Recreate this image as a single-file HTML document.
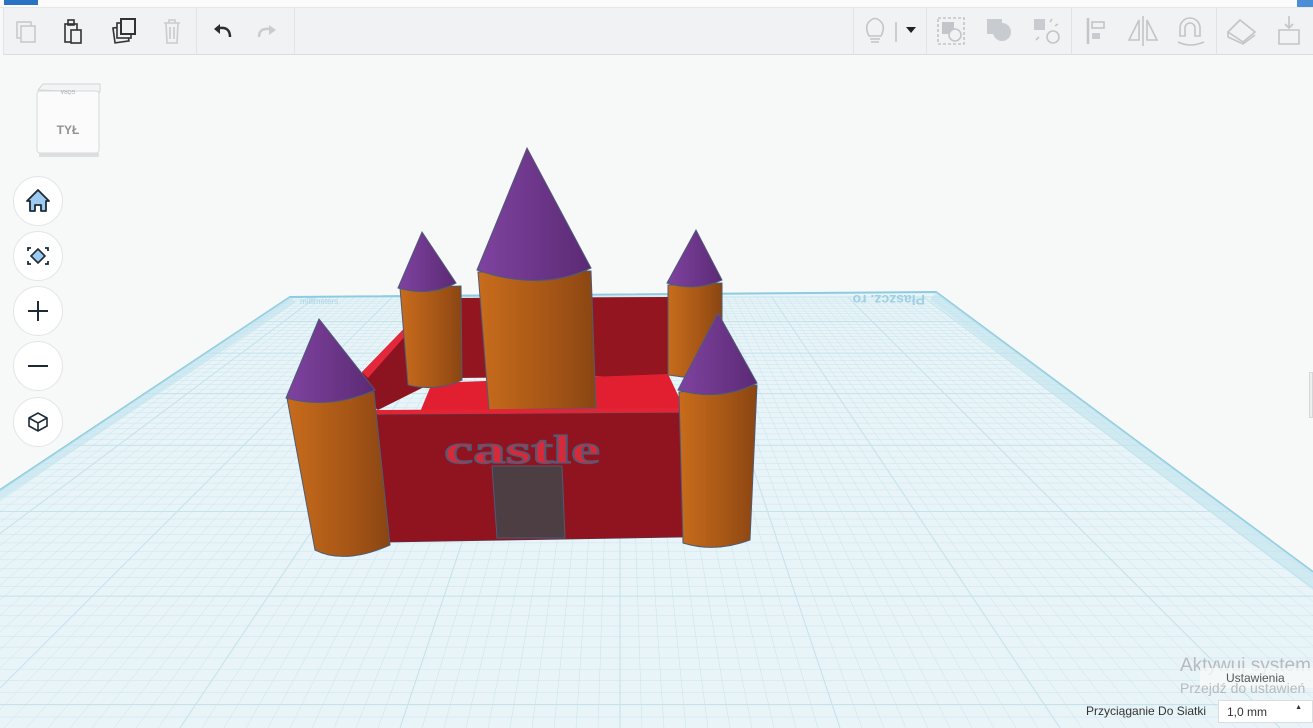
<!DOCTYPE html>
<html><head><meta charset="utf-8"><style>
*{margin:0;padding:0;box-sizing:border-box}
body{width:1313px;height:728px;overflow:hidden;background:#f7f8f8;font-family:"Liberation Sans","DejaVu Sans",sans-serif;position:relative}
.top{position:absolute;left:0;top:0;width:1313px;height:8px;background:#fbfbfc;border-bottom:1px solid #e6e7e8}
.tb{position:absolute;left:3px;top:8px;width:1310px;height:47px;background:#f1f2f3;border-bottom:1px solid #dcdddf;border-left:1px solid #e3e4e5}
.sep{position:absolute;top:8px;width:1px;height:46px;background:#e2e3e5}
.btn{position:absolute;width:50px;height:50px;border-radius:50%;background:#fff;border:1px solid #e4e5e7;left:13px}
svg{position:absolute;left:0;top:0}
</style></head><body>
<svg width="1313" height="728" id="scene">
<defs>
<linearGradient id="or" x1="0" x2="1"><stop offset="0" stop-color="#c86c1c"/><stop offset="0.6" stop-color="#a65616"/><stop offset="1" stop-color="#8a4512"/></linearGradient>
<linearGradient id="pu" x1="0" x2="1"><stop offset="0" stop-color="#7f43a0"/><stop offset="1" stop-color="#5b2a74"/></linearGradient>
<clipPath id="c"><polygon points="290,297 936,292 1313,572 1313,728 0,728 0,490"/></clipPath>
</defs>
<polygon points="290,297 936,292 1313,572 1313,728 0,728 0,490" fill="#e8f4f8"/>
<g id="grid" stroke="#c6e3ec" stroke-width="0.6" clip-path="url(#c)"></g>
<polyline points="0,490 290,297 936,292 1313,572" fill="none" stroke="#8ccbe0" stroke-width="2"/>
<polygon points="936,292 1313,572 1313,590 930,300" fill="#bfe2ee" opacity="0.6"/>
<polygon points="290,297 0,490 0,500 296,302" fill="#bfe2ee" opacity="0.6"/>
<text x="845" y="305" font-size="14" font-weight="bold" fill="#9fd0e2" transform="rotate(180 885 300)">Płaszcz. ro</text>
<text x="300" y="304" font-size="8" fill="#a8d4e4">millimeters</text>
<polygon points="455,298 668,297 668,376 455,378" fill="#931520"/>
<polygon points="432,383 668,374 685,410 420,412" fill="#e21f30"/>
<polygon points="362,372 425,307 430,308 432,383 378,410 370,404" fill="#8c1320"/>
<polygon points="362,372 425,307 429,309 368,378" fill="#e2283a"/>
<polygon points="690,305 698,305 705,350 696,352" fill="#e2283a"/>
<path d="M400,288 L408,385 Q436,392 462,380 L461,286 Z" fill="url(#or)" stroke="#4d5b77"/>
<path d="M398,288 L422,232 L456,283 Q430,297 398,288 Z" fill="url(#pu)" stroke="#4d5b77"/>
<path d="M668,285 L668,375 L690,378 L722,375 L722,283 Z" fill="url(#or)" stroke="#4d5b77"/>
<path d="M667,283 L696,230 L722,280 Q696,292 667,283 Z" fill="url(#pu)" stroke="#4d5b77"/>
<path d="M478,272 L489,410 L596,408 L591,271 Z" fill="url(#or)" stroke="#4d5b77"/>
<path d="M477,270 L527,148 L591,268 Q540,292 477,270 Z" fill="url(#pu)" stroke="#4d5b77"/>
<polygon points="375,410 683,408 683,413 375,416" fill="#e22535"/>
<polygon points="375,415 683,413 683,537 390,542" fill="#8f1420" stroke="#5a3040" stroke-width="0.8"/>
<text x="444" y="463" font-family="Liberation Serif,serif" font-weight="bold" font-size="40" fill="#d62a3a" stroke="#4d5b77" stroke-width="1.3" textLength="156" lengthAdjust="spacingAndGlyphs">castle</text>
<polygon points="492,466 562,466 565,538 497,538" fill="#4d3e43" stroke="#4d5b77"/>
<path d="M287,398 L315,550 Q345,565 390,545 L374,392 Z" fill="url(#or)" stroke="#4d5b77"/>
<path d="M286,398 L319,319 L375,390 Q330,410 286,398 Z" fill="url(#pu)" stroke="#4d5b77"/>
<path d="M679,392 L683,543 Q715,553 750,540 L757,385 Z" fill="url(#or)" stroke="#4d5b77"/>
<path d="M678,390 L718,313 L757,383 Q720,402 678,390 Z" fill="url(#pu)" stroke="#4d5b77"/>
</svg>
<div class="top"></div>
<div style="position:absolute;left:4px;top:0;width:34px;height:5px;background:#2a73c4"></div>
<div style="position:absolute;left:1297px;top:0;width:16px;height:7px;background:#4a8fd6"></div>
<div class="tb"></div>
<div class="sep" style="left:196px"></div><div class="sep" style="left:294px"></div>
<div class="sep" style="left:853px"></div><div class="sep" style="left:926px"></div><div class="sep" style="left:1071px"></div><div class="sep" style="left:1216px"></div>
<svg width="1313" height="56" style="top:0">
<g fill="none" stroke-width="1.6">
<rect x="17" y="22" width="14" height="16" stroke="#c9cbce"/><rect x="21" y="26" width="14" height="16" fill="#f1f2f3" stroke="#c9cbce"/>
<rect x="65" y="24" width="12" height="18" stroke="#333"/><rect x="71" y="30" width="10" height="13" fill="#f1f2f3" stroke="#333"/><rect x="68" y="20" width="6" height="5" stroke="#333"/>
<rect x="114" y="27" width="14" height="15" stroke="#333" transform="rotate(-8 121 35)"/><rect x="117" y="23" width="14" height="15" fill="#f1f2f3" stroke="#333"/><rect x="121" y="19" width="14" height="15" fill="#f1f2f3" stroke="#333" stroke-width="2"/>
<path d="M164,23h16M169,23v-3h6v3M166,23l1,20h10l1,-20M170,27v12M174,27v12" stroke="#c9cbce"/>
<path d="M230,37 Q230,27 220,28" stroke="#2a2d31" stroke-width="2.5"/><path d="M214,29l6,-5v10z" fill="#2a2d31"/>
<path d="M259,37 Q259,28 269,29" stroke="#c9cbce" stroke-width="2.5"/><path d="M276,30l-7,-5v10z" fill="#c9cbce"/>
<path d="M869,36 Q865,28 868,23 Q875,14 882,23 Q885,28 881,36z M870,39h10M871,42h8" stroke="#c2c5c9"/>
<path d="M896,22v20" stroke="#c2c5c9"/><path d="M906,27h10l-5,6z" fill="#222"/>
<rect x="938" y="18" width="26" height="26" stroke="#c2c5c9" stroke-dasharray="3 2"/><rect x="942" y="22" width="12" height="12" fill="#c2c5c9"/><circle cx="955" cy="35" r="6" fill="#f1f2f3" stroke="#c2c5c9"/>
<rect x="987" y="19" width="15" height="15" fill="#c8cbcf" stroke="none"/><circle cx="1002" cy="32" r="9" fill="#c8cbcf" stroke="none"/>
<rect x="1034" y="19" width="11" height="11" fill="#c8cbcf" stroke="none"/><circle cx="1053" cy="37" r="6" stroke="#c2c5c9"/><path d="M1050,22l2,-3M1055,26l3,-2M1039,37l-3,3" stroke="#c2c5c9"/>
<path d="M1088,18v26" stroke="#c2c5c9" stroke-width="2.5"/><rect x="1092" y="22" width="12" height="6" stroke="#c2c5c9"/><rect x="1092" y="33" width="8" height="6" fill="#c8cbcf" stroke="none"/>
<path d="M1143,16v30M1139,20l-10,20h10zM1147,20l10,20h-10z" stroke="#c2c5c9"/>
<path d="M1180,36v-8a10,10 0 0 1 20,0v8h-5v-8a5,5 0 0 0 -10,0v8z M1178,42q12,6 26,0" stroke="#c2c5c9"/>
<path d="M1228,32l12,-12l15,12l-12,10z M1228,32v5l15,7l12,-9" stroke="#c2c5c9"/>
<path d="M1279,30h20v14h-20z M1289,16v12M1285,24l4,4l4,-4" stroke="#c2c5c9"/>
</g></svg>
<svg width="110" height="110" style="left:28px;top:80px">
<path d="M10,10 L15,4 L72,4 L72,12 Z" fill="#f3f4f5" stroke="#d3d5d7"/>
<rect x="9" y="11" width="62" height="62" rx="3" fill="#fbfbfb" stroke="#d7d9db"/>
<rect x="11" y="73" width="60" height="4" fill="#dcdedf"/>
<text x="40" y="54" font-size="12" font-weight="bold" fill="#909396" text-anchor="middle">TYŁ</text>
<text x="40" y="14" font-size="5" fill="#aaa" text-anchor="middle" transform="rotate(180 40 12)">GÓRA</text>
</svg>
<div class="btn" style="top:176px"></div><div class="btn" style="top:231px"></div><div class="btn" style="top:286px"></div><div class="btn" style="top:341px"></div><div class="btn" style="top:397px"></div>
<svg width="80" height="450" style="left:0;top:0">
<path d="M27,201 L38,190 L49,201 H46 V211 H41 V205 H35 V211 H30 V201 Z" fill="#9ccaf0" stroke="#1d2a36" stroke-width="1.8" stroke-linejoin="round"/>
<path d="M31,248h-3v3M45,248h3v3M31,264h-3v-3M45,264h3v-3" fill="none" stroke="#1d2a36" stroke-width="1.8"/>
<path d="M38,249l7,7l-7,7l-7,-7z" fill="#9ccaf0" stroke="#1d2a36" stroke-width="1.6"/>
<path d="M28,311h20M38,301v20" stroke="#1d2a36" stroke-width="2"/>
<path d="M28,366h20" stroke="#1d2a36" stroke-width="2"/>
<path d="M29,418l9,-5l9,5v8l-9,5l-9,-5z M29,418l9,5l9,-5M38,423v8" fill="#fff" stroke="#1d2a36" stroke-width="1.6"/>
</svg>
<div style="position:absolute;left:1309px;top:372px;width:4px;height:46px;background:#eceef0;border:1px solid #d5d7d9"></div>
<div style="position:absolute;left:1180px;top:655px;font-size:19px;color:#b8babc;white-space:nowrap">Aktywuj system</div>
<div style="position:absolute;left:1200px;top:668px;width:113px;height:20px;background:rgba(248,249,249,.8);font-size:12px;color:#555;padding-left:26px;padding-top:3px">Ustawienia</div>
<div style="position:absolute;left:1180px;top:680px;font-size:14px;color:#b8babc;white-space:nowrap">Przejdź do ustawień</div>
<div style="position:absolute;left:1086px;top:704px;font-size:12px;color:#333">Przyciąganie Do Siatki</div>
<div style="position:absolute;left:1218px;top:700px;width:95px;height:23px;background:#fff;border:1px solid #dcdde0;font-size:12px;color:#333;padding:4px 0 0 8px">1,0 mm<span style="position:absolute;right:10px;top:3px;font-size:7px">▲</span></div>
<script>
var g=document.getElementById('grid'),s='';
var vx=620,vy=70;
for(var i=-120;i<=120;i++){var bx=620+i*22;var t=(297-vy)/(728-vy);var x1=vx+(bx-vx)*t;
var w=(i%10==0)?1.1:0.5;s+='<line x1="'+x1+'" y1="297" x2="'+bx+'" y2="728" stroke-width="'+w+'"/>';}
var y=297,dy=2.2,k=0;
while(y<728){s+='<line x1="0" y1="'+y.toFixed(1)+'" x2="1313" y2="'+y.toFixed(1)+'" stroke-width="'+(k%10==0?1.1:0.45)+'"/>';y+=dy;dy*=1.025;k++;}
g.innerHTML=s;
</script>
</body></html>
